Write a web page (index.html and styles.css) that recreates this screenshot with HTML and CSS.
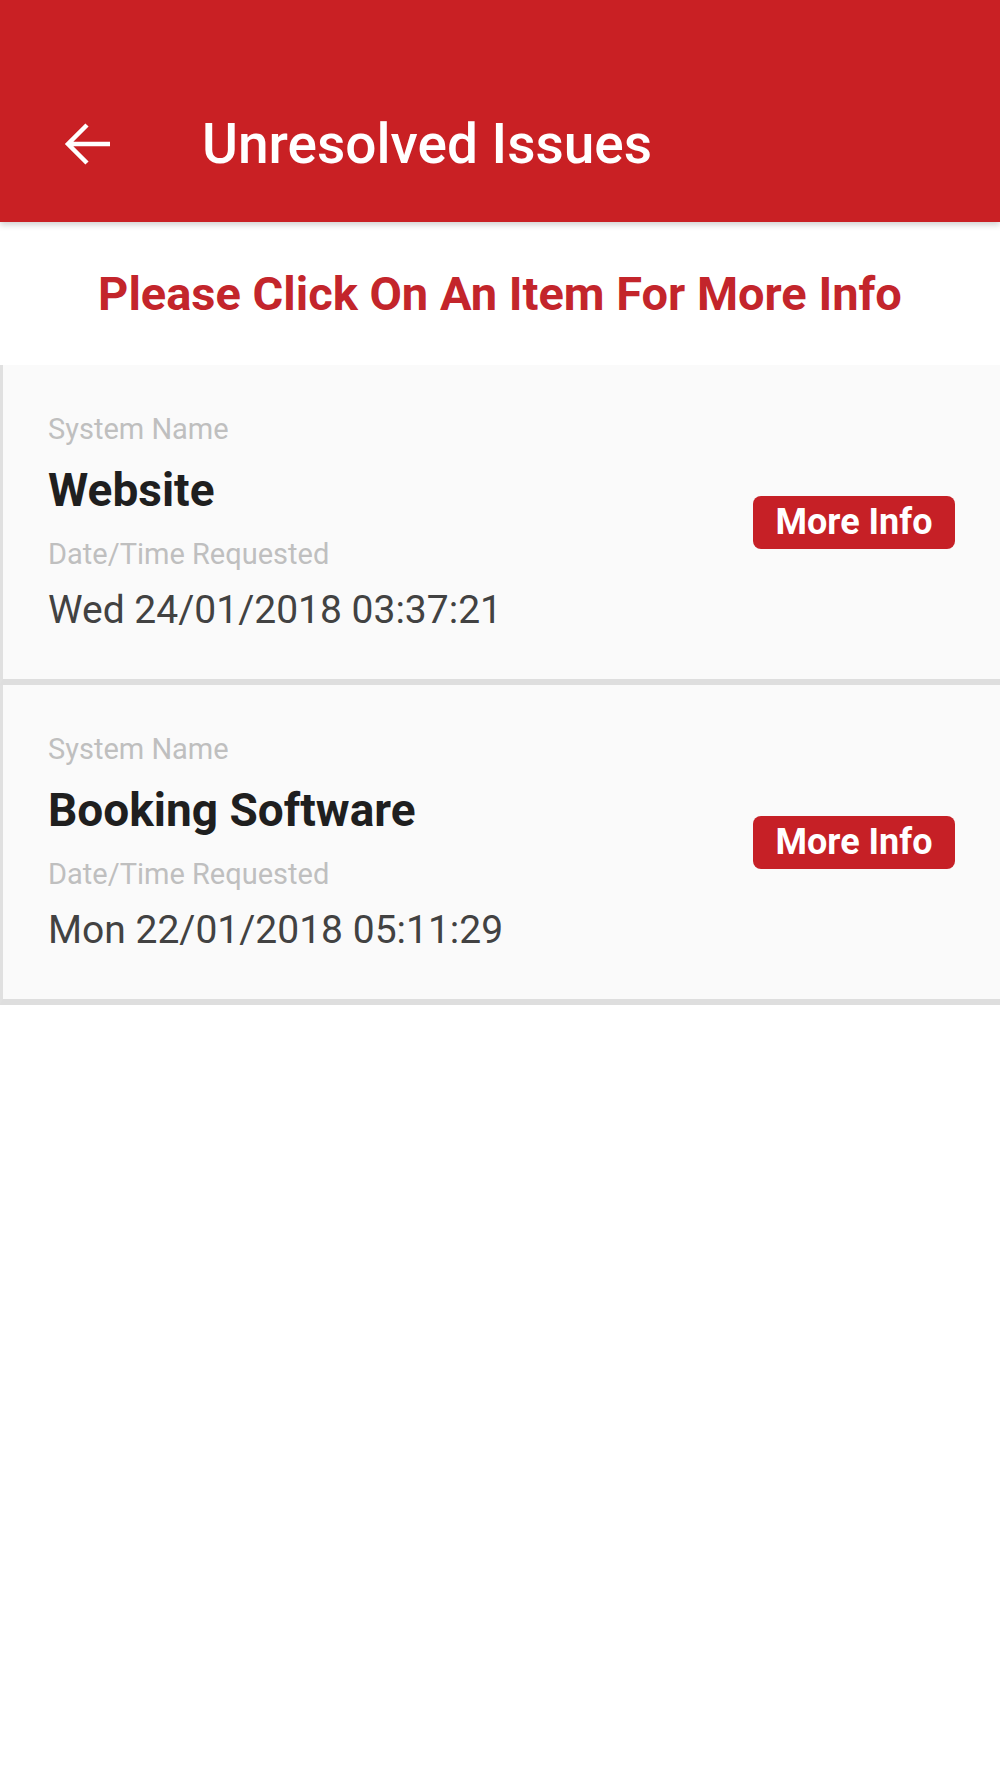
FILE: index.html
```html
<!DOCTYPE html>
<html lang="en">
<head>
  <meta charset="UTF-8">
  <meta name="viewport" content="width=device-width, initial-scale=1.0">
  <title>Unresolved Issues</title>
  <link rel="stylesheet" href="styles.css">
</head>
<body>
  <header class="app-bar">
    <button class="back" aria-label="Back">
      <svg width="48" height="42" viewBox="0 0 48 42">
        <path d="M46 21H4M23 2L4 21L23 40" fill="none" stroke="#fff" stroke-width="4.5"/>
      </svg>
    </button>
    <h1 class="title">Unresolved Issues</h1>
  </header>

  <p class="hint">Please Click On An Item For More Info</p>

  <div class="issue-list">
    <div class="issue">
      <div class="issue-info">
        <span class="label">System Name</span>
        <span class="name">Website</span>
        <span class="label label-date">Date/Time Requested</span>
        <span class="date">Wed 24/01/2018 03:37:21</span>
      </div>
      <button class="more">More Info</button>
    </div>

    <div class="issue">
      <div class="issue-info">
        <span class="label">System Name</span>
        <span class="name">Booking Software</span>
        <span class="label label-date">Date/Time Requested</span>
        <span class="date">Mon 22/01/2018 05:11:29</span>
      </div>
      <button class="more">More Info</button>
    </div>
  </div>
</body>
</html>
```

FILE: styles.css
```css
body {
  font-family: Roboto, "Noto Sans", Arial, sans-serif;
  margin: 0;
  padding: 0;
  background: #fff;
  height: 100vh;
  overflow: hidden;
}

.app-bar {
  height: 222px;
  box-sizing: border-box;
  padding: 66px 0 0 64px;
  background: #c92024;
  display: flex;
  align-items: center;
  box-shadow: 0 3px 6px rgba(0, 0, 0, 0.18);
  position: relative;
}

.back {
  background: none;
  border: none;
  padding: 0;
  width: 48px;
  height: 42px;
  display: flex;
}

.title {
  margin: 0 0 0 90px;
  color: #fff;
  font-size: 55px;
  font-weight: 500;
}

.hint {
  margin: 0;
  height: 143px;
  display: flex;
  align-items: center;
  justify-content: center;
  color: #c3252b;
  font-size: 47px;
  font-weight: 700;
}

.issue {
  display: flex;
  align-items: center;
  justify-content: space-between;
  height: 320px;
  box-sizing: border-box;
  padding: 0 45px 0 45px;
  background: #fafafa;
  border-left: 3px solid #e0e0e0;
  border-bottom: 6px solid #dedede;
}

.issue-info {
  display: flex;
  flex-direction: column;
  padding-bottom: 0;
}

.label {
  font-size: 29px;
  line-height: 36px;
  color: #bfbfbf;
}

.name {
  margin-top: 16px;
  font-size: 46px;
  line-height: 54px;
  font-weight: 700;
  color: #1f1f1f;
}

.label-date {
  margin-top: 19px;
}

.date {
  margin-top: 15px;
  font-size: 39px;
  line-height: 46px;
  color: #424242;
}

.more {
  width: 202px;
  height: 53px;
  border: none;
  border-radius: 8px;
  background: #c62026;
  color: #fff;
  font-family: inherit;
  font-size: 36px;
  font-weight: 700;
  padding: 0;
}
```
